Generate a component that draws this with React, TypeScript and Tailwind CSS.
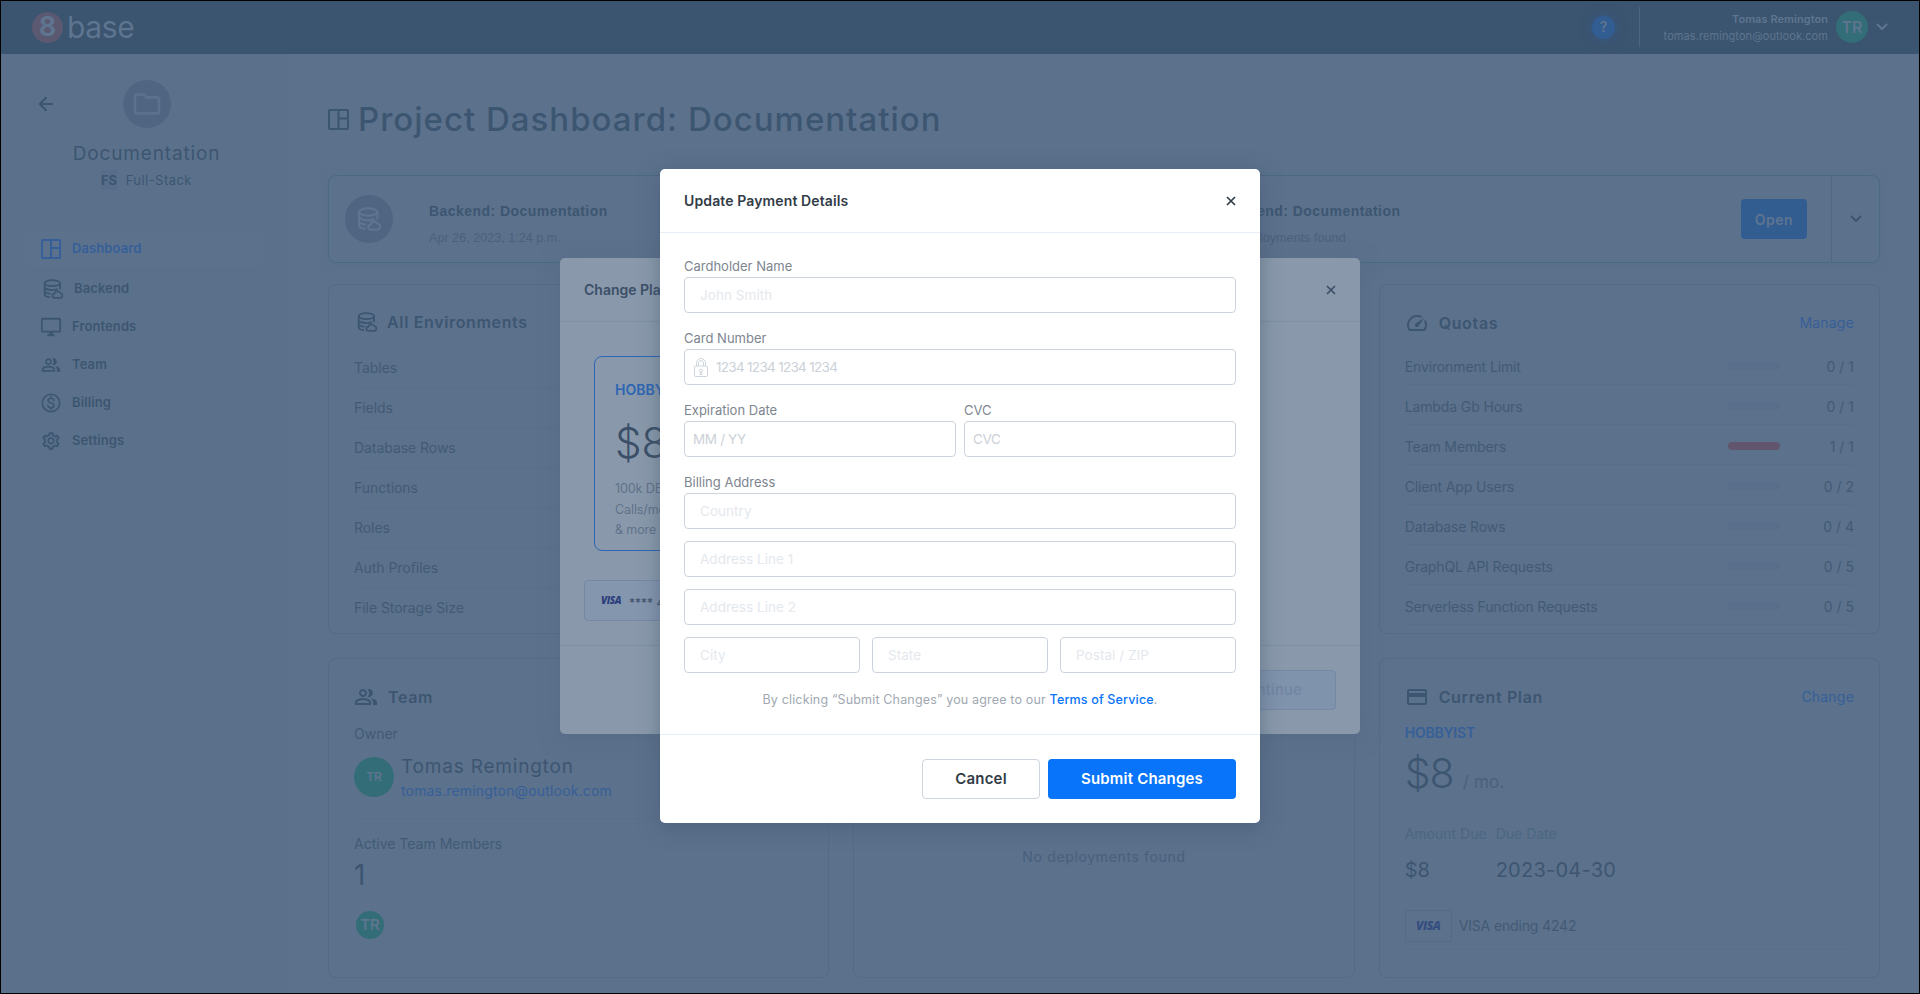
import type { ReactNode } from 'react';
import { AiOutlineSetting } from 'react-icons/ai';
import { MdCreditCard, MdOutlineDesktopWindows, MdOutlinePeopleAlt, MdSpeed, MdOutlineFolder } from 'react-icons/md';

function DashboardIcon({ className }: { className: string }) {
  return (
    <svg viewBox="0 0 21 21" className={className} fill="none" stroke="currentColor" strokeWidth="2.100">
      <rect x="1" y="1" width="19" height="19" rx="1" />
      <path d="M10.500 1v19M10.500 9.500h9.500" />
    </svg>
  );
}

function DatabaseIcon({ className }: { className: string }) {
  return (
    <svg viewBox="0 0 24 24" className={className} fill="none" stroke="currentColor" strokeWidth="2.100" strokeLinecap="round">
      <ellipse cx="11.2" cy="5" rx="9.2" ry="3.6" />
      <path d="M2 5v13.2c0 1.7 2.4 3 5.6 3.5M20.400 5v6.500M2 9.600c0 2 4.100 3.600 9.200 3.600 2.200 0 4.200-.3 5.800-.8M2 14c0 1.800 2.600 3 6.200 3.500" />
      <path d="M13.800 22.600a2.500 2.500 0 0 1-.2-5 4 4 0 0 1 7.500-.5 2.800 2.800 0 0 1-.2 5.500z" />
    </svg>
  );
}

function BillingIcon({ className }: { className: string }) {
  return (
    <svg viewBox="0 0 20 20" className={className} fill="none" stroke="currentColor" strokeWidth="1.600" strokeLinecap="round">
      <circle cx="10" cy="10" r="8.700" />
      <path d="M12.900 7.400C12.600 6 11.500 5.300 10 5.300c-1.700 0-2.900.9-2.900 2.200 0 3.200 5.900 1.600 5.900 4.900 0 1.400-1.300 2.300-3 2.300s-2.900-.9-3.100-2.300M10 3.600v1.700M10 14.700v1.700" />
    </svg>
  );
}

function Chevron({ className }: { className: string }) {
  return (
    <svg viewBox="0 0 12 8" className={className} fill="none" stroke="currentColor" strokeWidth="2" strokeLinecap="round" strokeLinejoin="round">
      <path d="M1.500 1.500 6 6l4.500-4.500" />
    </svg>
  );
}

function Close({ className }: { className: string }) {
  return (
    <svg viewBox="0 0 10 10" className={className} fill="none" stroke="currentColor" strokeWidth="1.700">
      <path d="m1 1 8 8M9 1 1 9" />
    </svg>
  );
}

function Lock() {
  return (
    <svg viewBox="0 0 14 19" className="ml-px h-[19px] w-[14px] text-[#c9d0d8]" fill="none" stroke="currentColor" strokeWidth="0.900">
      <rect x="0.500" y="8" width="13" height="10.500" rx="1" />
      <path d="M2.500 8V5a4.500 4.500 0 0 1 9 0v3M4.500 8V5a2.500 2.500 0 0 1 5 0v3M6.300 14.200 6 16.500h2l-.3-2.300" />
      <circle cx="7" cy="12.700" r="1.500" />
    </svg>
  );
}

const nav: { label: string; icon: ReactNode; style: string }[] = [
  { label: 'Dashboard', icon: <DashboardIcon className="size-5" />, style: 'h-[37px] bg-[#5c728c] text-[#365f9a] pl-4' },
  { label: 'Backend', icon: <DatabaseIcon className="size-5" />, style: 'mt-[3px] h-[38px] pl-[18px]' },
  { label: 'Frontends', icon: <MdOutlineDesktopWindows className="size-[22px] -mx-px" />, style: 'h-[38px] pl-4' },
  { label: 'Team', icon: <MdOutlinePeopleAlt className="size-5" />, style: 'h-[38px] pl-4' },
  { label: 'Billing', icon: <BillingIcon className="size-5" />, style: 'h-[38px] pl-4' },
  { label: 'Settings', icon: <AiOutlineSetting className="size-5" strokeWidth="20" />, style: 'h-[38px] pl-4' },
];

const environmentRows = ['Tables', 'Fields', 'Database Rows', 'Functions', 'Roles', 'Auth Profiles', 'File Storage Size'];

const quotas = [
  { label: 'Environment Limit', value: '0 / 1' },
  { label: 'Lambda Gb Hours', value: '0 / 1' },
  { label: 'Team Members', value: '1 / 1', full: true },
  { label: 'Client App Users', value: '0 / 2' },
  { label: 'Database Rows', value: '0 / 4' },
  { label: 'GraphQL API Requests', value: '0 / 5' },
  { label: 'Serverless Function Requests', value: '0 / 5' },
];

function Header() {
  return (
    <header className="flex h-[53px] shrink-0 items-center bg-[#3b546f] pr-[31px] pb-px pl-[31px] text-[#5e748f]">
      <div className="flex size-[31px] items-center justify-center rounded-full bg-[#5b5871] text-[27px] font-bold">8</div>
      <span className="-mt-px ml-1 text-[30px] leading-none tracking-[-0.400px]">base</span>
      <div className="ml-auto flex size-[23px] items-center justify-center rounded-full bg-[#325d93] text-sm font-semibold shadow-[0_0_8px_3px_#38577b]">?</div>
      <div className="mr-[24px] ml-[24px] h-10 w-px bg-[#4d6580]" />
      <div className="flex w-[164px] flex-col items-end whitespace-nowrap">
        <span className="text-[11px] leading-[18px] font-semibold tracking-[0.050px]">Tomas Remington</span>
        <span className="text-[11px] leading-[17px] tracking-[0.080px]">tomas.remington@outlook.com</span>
      </div>
      <div className="ml-2 flex size-8 items-center justify-center rounded-full bg-[#336d77] text-base font-semibold">TR</div>
      <Chevron className="ml-[8px] h-2 w-3" />
    </header>
  );
}

function Sidebar() {
  return (
    <aside className="w-[287px] shrink-0 border-r border-[#5a6f89] bg-[#5b718b]">
      <div className="relative flex h-[151px] flex-col items-center border-b border-[#587089] pt-[26px] pr-[1px] pl-[6px]">
        <svg viewBox="0 0 16 16" className="absolute top-[42px] left-[37px] size-4" fill="none" stroke="currentColor" strokeWidth="2">
          <path d="M15 8H2M8.500 1.300 1.800 8l6.700 6.700" />
        </svg>
        <div className="flex size-12 items-center justify-center rounded-full bg-[#506582]">
          <MdOutlineFolder className="size-8 text-[#5b718c]" />
        </div>
        <div className="mt-[12px] text-[19px] leading-7 tracking-[0.850px] whitespace-nowrap">Documentation</div>
        <div className="mt-[2px] flex items-center gap-[9px] text-[13px] leading-5">
          <span className="bg-[#586d89] font-bold tracking-[-0.300px]">FS</span>
          <span className="tracking-[0.450px]">Full-Stack</span>
        </div>
      </div>
      <nav className="flex flex-col pt-[25px] pr-[23px] pl-6">
        {nav.map((item) => (
          <div key={item.label} className={`flex items-center gap-[11px] rounded text-[13px] font-semibold tracking-[0.100px] ${item.style}`}>
            {item.icon}
            {item.label}
          </div>
        ))}
      </nav>
    </aside>
  );
}

function Card({ className, children }: { className?: string; children?: ReactNode }) {
  return <section className={`rounded-lg border border-[#566b86] px-[25px] ${className ?? ''}`}>{children}</section>;
}

function CardTitle({ icon, title, action }: { icon: ReactNode; title: string; action?: string }) {
  return (
    <div className="flex h-6 items-center gap-[10px] text-base font-semibold tracking-[0.650px]">
      {icon}
      {title}
      {action && <span className="ml-auto text-sm font-normal tracking-[0.200px] text-[#365f98]">{action}</span>}
    </div>
  );
}

function Banner() {
  return (
    <section className="flex h-[88px] items-center rounded-lg border border-[#4c6984] pl-[16px] font-['Liberation_Sans',sans-serif] shadow-[0_2px_8px_#56708a]">
      <div className="flex size-12 items-center justify-center rounded-full bg-[#506582] text-[#5e7590]">
        <DatabaseIcon className="size-6" />
      </div>
      <div className="ml-9 w-[790px] pt-[10px]">
        <div className="text-sm leading-[22px] font-bold tracking-[0.450px]">Backend: Documentation</div>
        <div className="mt-[6px] text-[12.500px] leading-[20px] tracking-[0.050px] text-[#4a617c]">Apr 26, 2023, 1:24 p.m.</div>
      </div>
      <div className="pt-[10px]">
        <div className="text-sm leading-[22px] font-bold tracking-[0.450px]">Frontend: Documentation</div>
        <div className="mt-[6px] text-[12.500px] leading-[20px] tracking-[0.080px] text-[#4a617c]">No deployments found</div>
      </div>
      <div className="ml-auto flex h-10 w-[66px] items-center justify-center rounded bg-[#325d91] pt-px font-[Inter] text-sm font-semibold tracking-[0.500px] text-[#5e7490]">Open</div>
      <div className="ml-6 flex h-full w-12 items-center justify-center border-l border-[#4f6984]">
        <Chevron className="h-2 w-3" />
      </div>
    </section>
  );
}

function Dashboard() {
  return (
    <main className="flex min-w-0 flex-1 flex-col pr-[39px] pl-10">
      <h1 className="flex h-[121px] items-center gap-[9px] pt-[10px] text-[33px] font-medium tracking-[1px]">
        <DashboardIcon className="size-[21px]" />
        Project Dashboard: Documentation
      </h1>
      <Banner />
      <div className="mt-[21px] grid grid-cols-3 grid-rows-[350px_320px] gap-6">
        <Card className="pt-[25px]">
          <CardTitle icon={<DatabaseIcon className="ml-[3px] size-5" />} title="All Environments" />
          <div className="mt-[15px] text-sm tracking-[-0.050px] text-[#425b75]">
            {environmentRows.map((row) => (
              <div key={row} className="flex h-10 items-center border-b border-[#596f89] pb-[2px] last:border-0">{row}</div>
            ))}
          </div>
        </Card>
        <Card />
        <Card className="pt-[26px]">
          <CardTitle icon={<MdSpeed className="size-6" />} title="Quotas" action="Manage" />
          <div className="mt-[10px] text-sm text-[#425b75]">
            {quotas.map((quota) => (
              <div key={quota.label} className="flex h-10 items-center border-b border-[#596f89] pt-[5px]">
                <span className="tracking-[-0.120px]">{quota.label}</span>
                <span className={`mb-[2px] ml-auto h-2 w-[52px] rounded-full ${quota.full ? 'bg-[#62566f]' : 'bg-[#586e8a]'}`} />
                <span className="w-[74px] text-right">{quota.value}</span>
              </div>
            ))}
          </div>
        </Card>
        <Card className="pt-[26px] text-sm">
          <CardTitle icon={<MdOutlinePeopleAlt className="size-6" />} title="Team" />
          <div className="mt-[15px] leading-5 text-[#425b75]">Owner</div>
          <div className="mt-[11px] flex h-[64px] gap-[7px] border-b border-[#596f89] pt-[2px]">
            <div className="flex size-10 items-center justify-center rounded-full bg-[#336d77] text-xs font-semibold text-[#5f7590]">TR</div>
            <div className="-mt-[2px]">
              <div className="text-[19px] leading-6 tracking-[0.800px]">Tomas Remington</div>
              <div className="leading-6 tracking-[0.160px] text-[#365f98]">tomas.remington@outlook.com</div>
            </div>
          </div>
          <div className="mt-[15px] leading-5 text-[#425b75]">Active Team Members</div>
          <div className="mt-[1px] text-[28px] leading-10">1</div>
          <div className="mt-[16px] ml-[2px] flex size-7 items-center justify-center rounded-full bg-[#336d77] text-[15px] font-semibold text-[#5f7590]">TR</div>
        </Card>
        <Card className="pt-[188px] text-center text-sm tracking-[0.650px] text-[#48607b]">No deployments found</Card>
        <Card className="pt-[26px] text-sm">
          <CardTitle icon={<MdCreditCard className="size-6" />} title="Current Plan" action="Change" />
          <div className="mt-[14px] text-sm leading-5 font-semibold tracking-[-0.200px] text-[#365f98]">HOBBYIST</div>
          <div className="mt-[5px] flex items-baseline gap-[9px] text-[41px] leading-[50px] font-light tracking-[-1px]">
            $8 <span className="text-[17px] leading-6 font-normal tracking-[0.200px] text-[#4a617c]">/ mo.</span>
          </div>
          <div className="mt-[24px] flex leading-6 text-[#4b6781]">
            <span className="w-[91px]">Amount Due</span>
            <span>Due Date</span>
          </div>
          <div className="mt-[12px] flex text-[20px] leading-6 tracking-[-0.100px]">
            <span className="w-[91px]">$8</span>
            <span className="tracking-[0.250px]">2023-04-30</span>
          </div>
          <div className="mt-[18px] flex h-[50px] items-center gap-[7px] border-b border-[#596f89] pt-[2px] tracking-[-0.150px] text-[#425b75]">
            <span className="flex h-8 w-[47px] items-center justify-center border border-[#546a86] font-['Open_Sans'] text-[12px] font-extrabold tracking-[-0.500px] text-[#354e80] italic">VISA</span>
            VISA ending 4242
          </div>
        </Card>
      </div>
    </main>
  );
}

function ChangePlanModal() {
  return (
    <div className="absolute inset-0 flex items-center justify-center pb-[2px]">
      <div className="flex h-[476px] w-[800px] flex-col rounded-[5px] bg-[#8999ab] text-[#3b4f68] shadow-[0_4px_20px_#52677f80]">
        <div className="flex h-16 items-center justify-between border-b border-[#7e90a5] px-6 text-sm font-semibold">
          Change Plan
          <Close className="size-[10px]" />
        </div>
        <div className="flex flex-1 flex-col items-start px-6 pt-[34px]">
          <div className="ml-[10px] h-[195px] w-[230px] rounded-lg border border-[#2c65b4] pt-[21px] pl-5">
            <div className="text-sm leading-6 font-semibold text-[#2c65b4]">HOBBYIST</div>
            <div className="mt-4 text-[42px] leading-[50px] font-light">$8</div>
            <div className="mt-[11px] w-[180px] text-[12.500px] leading-[20.500px] tracking-[-0.100px] text-[#5f718a]">100k DB Rows, 50k API<br />Calls/mo, 10GB Storage<br />&amp; more</div>
          </div>
          <div className="mt-[29px] flex h-[41px] w-[360px] items-center rounded border border-[#7488a3] bg-[#8495ae] pl-4 text-sm">
            <span className="font-['Open_Sans'] text-[10px] font-extrabold tracking-[-0.500px] text-[#2c3f7c] italic">VISA</span>
            <span className="ml-2 pt-1 text-[12px]">**** 4242</span>
          </div>
        </div>
        <div className="flex h-[89px] items-center justify-end border-t border-[#7e90a5] px-6">
          <div className="flex h-10 w-[134px] items-center justify-center rounded border border-[#7488a3] bg-[#8093ac] text-[15px] font-semibold text-[#7187a3]">Continue</div>
        </div>
      </div>
    </div>
  );
}

type FieldProps = { label?: string; placeholder: string; variant?: 'text' | 'card' | 'number'; icon?: ReactNode };

const fieldVariants = {
  text: { box: 'pl-[15px]', input: 'tracking-[0.050px] placeholder:text-[#e4e8ed]' },
  card: { box: 'pl-2', input: 'tracking-[-0.350px] placeholder:text-[#cbd1d8]' },
  number: { box: 'pl-2', input: 'tracking-[-0.700px] placeholder:text-[#cbd1d8]' },
};

function Field({ label, placeholder, variant = 'text', icon }: FieldProps) {
  return (
    <label className="block min-w-0 flex-1">
      {label && <span className="block pt-px pb-px text-[13px] leading-5 text-[#7d858f]">{label}</span>}
      <span className={`flex h-9 items-center gap-2 rounded border border-[#ccd3dc] ${fieldVariants[variant].box}`}>
        {icon}
        <input placeholder={placeholder} className={`min-w-0 flex-1 bg-transparent pt-px text-[13.500px] outline-none ${fieldVariants[variant].input}`} />
      </span>
    </label>
  );
}

function PaymentModal() {
  return (
    <div className="absolute inset-0 flex items-center justify-center pb-[2px]">
      <div className="flex h-[654px] w-[600px] flex-col rounded-[5px] bg-white text-[#323c47] shadow-[0_4px_20px_#3d526b80]">
        <div className="flex h-16 items-center justify-between border-b border-[#e6edf4] px-6 text-sm font-semibold tracking-[0.120px]">
          Update Payment Details
          <Close className="size-[10px]" />
        </div>
        <div className="flex flex-1 flex-col px-6 pt-[22px]">
          <div className="flex">
            <Field label="Cardholder Name" placeholder="John Smith" />
          </div>
          <div className="mt-[14px] flex">
            <Field label="Card Number" placeholder="1234 1234 1234 1234" variant="number" icon={<Lock />} />
          </div>
          <div className="mt-[14px] flex gap-2">
            <Field label="Expiration Date" placeholder="MM / YY" variant="card" />
            <Field label="CVC" placeholder="CVC" variant="card" />
          </div>
          <div className="mt-[14px] flex flex-col gap-3">
            <Field label="Billing Address" placeholder="Country" />
            <Field placeholder="Address Line 1" />
            <Field placeholder="Address Line 2" />
            <div className="flex gap-3">
              <Field placeholder="City" />
              <Field placeholder="State" />
              <Field placeholder="Postal / ZIP" />
            </div>
          </div>
          <p className="mt-[17px] text-center text-[12.500px] leading-5 tracking-[0.160px] text-[#a0a8b2]">
            By clicking “Submit Changes” you agree to our <span className="font-medium text-[#0874f9]">Terms of Service</span>.
          </p>
        </div>
        <div className="flex h-[89px] items-center justify-end gap-2 border-t border-[#e6edf4] px-6 text-[15px] font-semibold tracking-[0.200px]">
          <button className="h-10 w-[118px] rounded border border-[#ced5dd]">Cancel</button>
          <button className="h-10 w-[188px] rounded bg-[#0874f9] text-white">Submit Changes</button>
        </div>
      </div>
    </div>
  );
}

export default function App() {
  return (
    <div className="relative flex h-[994px] w-[1920px] flex-col overflow-hidden border border-black bg-[#5c718c] font-[Inter,sans-serif] text-[#3c5671]">
      <Header />
      <div className="flex min-h-0 flex-1">
        <Sidebar />
        <Dashboard />
      </div>
      <ChangePlanModal />
      <PaymentModal />
    </div>
  );
}
